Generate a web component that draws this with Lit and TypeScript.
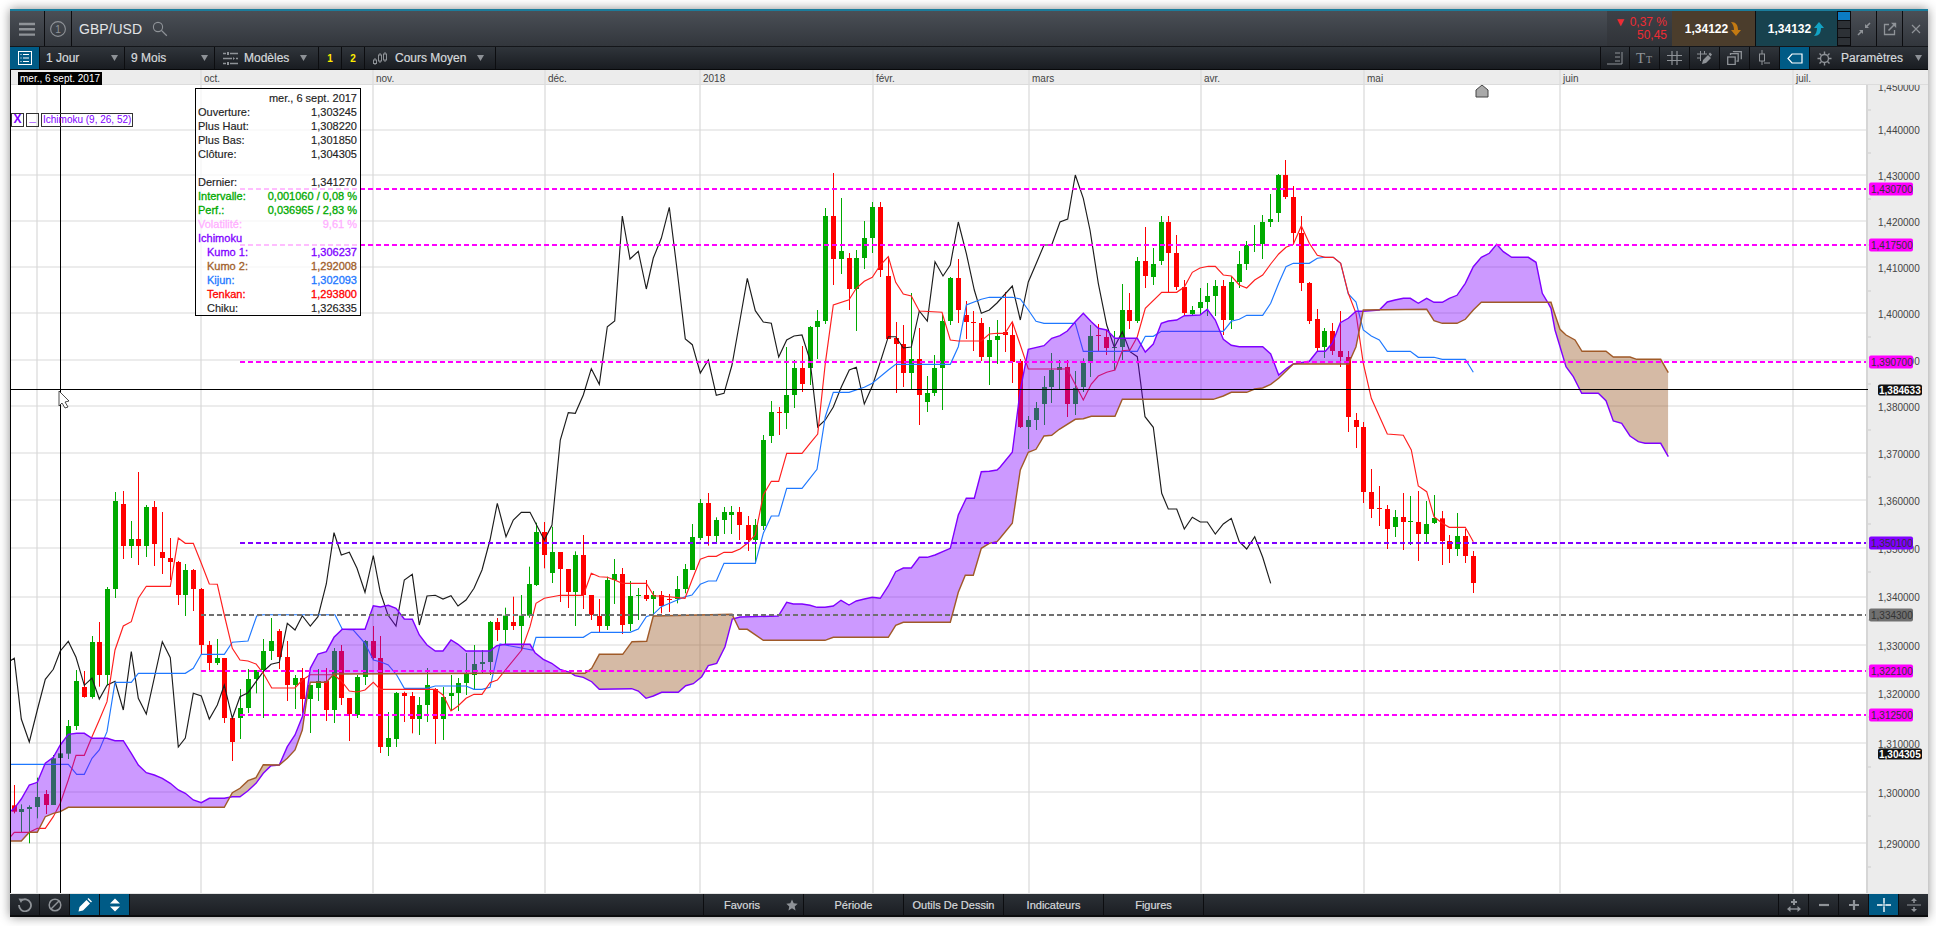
import { LitElement, html, css, svg } from "lit";
import { customElement } from "lit/decorators.js";

type Pt = [number, number];
type Candle = [number, number, number, number, number, number];

// traced at 3x, so every series keeps its origin and gets divided down here
const trace = (ox: number, oy: number, flat: number[]): Pt[] => {
  const out: Pt[] = [];
  for (let i = 0; i < flat.length; i += 2) out.push([ox + flat[i] / 3, oy + flat[i + 1] / 3]);
  return out;
};
const toPath = (p: Pt[]) => p.map((q) => `${q[0].toFixed(1)},${q[1].toFixed(1)}`).join(" ");

// x, wick top, wick bottom, body top, body bottom, 1 = up
const CANDLES_A: Candle[] = [
  [43,1155,1240,1216,1235,0],[64,1213,1298,1227,1236,1],[88,1216,1330,1221,1227,1],[111,1133,1255,1191,1221,1],
  [137,1170,1242,1182,1215,0],[159,1065,1215,1075,1215,1],[181,1050,1074,1060,1074,1],[205,960,1077,978,1061,1],
  [228,810,990,843,978,1],[253,813,893,861,891,0],[276,708,896,726,891,1],[298,666,860,726,825,0],
  [321,561,855,567,825,1],[345,276,594,303,567,1],[370,273,477,312,438,0],[393,363,474,417,438,1],
  [415,216,495,417,438,0],[438,315,471,321,438,1],[463,303,498,321,432,0],[487,336,522,456,474,0],
  [511,414,540,474,486,0],[535,483,615,486,585,0],[556,492,648,510,585,1],[580,507,633,510,567,0],
  [604,564,765,567,735,0],[628,723,810,735,789,0],[652,717,795,774,789,1],[673,774,969,774,954,0],
  [697,954,1083,954,1026,0],[720,867,1017,924,954,1],[744,807,939,837,924,1],[768,810,880,810,837,1],
  [790,717,954,753,810,1],[813,654,780,723,753,1],[838,687,807,693,771,0],[862,723,903,771,855,0],
  [885,825,927,834,855,1],[907,804,940,834,897,0],[931,855,999,855,897,1],[954,807,903,843,864,1],
  [979,804,963,843,930,0],[1002,744,969,753,930,1],[1024,735,915,753,894,0],[1048,894,1023,894,942,0],
  [1071,825,954,831,945,1],[1095,720,855,723,831,1],[1120,678,780,723,774,0],[1141,708,1059,774,1041,0],
  [1164,936,1068,1014,1041,1],[1188,876,1041,879,1017,1],[1213,875,966,879,888,0],[1237,876,1000,888,957,0],
  [1258,891,1005,915,957,1],[1281,804,966,855,915,1],[1306,864,1032,867,957,0],[1329,861,1020,891,957,1],
  [1353,825,930,879,888,1],[1374,834,933,849,879,1],[1398,759,885,822,849,1],[1422,735,867,792,825,1],
  [1446,750,820,786,792,1],[1470,663,825,666,786,1],[1492,654,723,666,690,0],
];
const CANDLES_B: Candle[] = [
  [15,1373,1485,1397,1440,1],[40,1340,1440,1416,1428,0],[64,1335,1500,1397,1428,1],[87,1250,1403,1302,1397,1],
  [108,1118,1308,1146,1305,1],[133,1116,1255,1146,1215,0],[156,1130,1299,1206,1269,1],[181,1206,1356,1206,1257,0],
  [205,1257,1374,1257,1326,0],[226,1204,1428,1215,1326,1],[250,1155,1377,1215,1335,0],[274,1335,1410,1335,1395,0],
  [298,1347,1446,1398,1428,0],[321,1280,1440,1290,1428,1],[342,1227,1362,1272,1290,1],[367,1254,1452,1272,1425,0],
  [390,1293,1443,1338,1422,1],[415,1314,1410,1335,1338,1],[439,1290,1353,1335,1347,0],[460,1323,1400,1335,1347,1],
  [484,1323,1390,1335,1368,0],[508,1332,1386,1347,1350,0],[532,1278,1360,1317,1347,1],[555,1242,1330,1257,1317,1],
  [576,1122,1260,1161,1260,1],[600,1047,1170,1059,1164,1],[625,1029,1187,1059,1158,0],[648,1102,1176,1110,1158,1],
  [672,1071,1152,1086,1110,1],[693,1068,1152,1086,1095,1],[718,1071,1170,1086,1125,0],[743,1098,1203,1125,1170,0],
  [765,1107,1240,1125,1170,1],[789,855,1140,870,1128,1],[814,753,879,786,858,1],[836,771,855,786,789,0],
  [858,591,837,735,789,1],[882,630,774,654,735,1],[907,588,726,654,702,0],[930,528,705,531,654,1],
  [951,480,627,513,531,1],[975,174,522,198,513,1],[1000,69,405,198,327,0],[1023,144,372,303,327,1],
  [1048,309,480,324,417,0],[1068,300,543,324,417,1],[1092,213,357,264,324,1],[1116,156,309,171,264,1],
  [1141,156,381,171,360,0],[1165,321,567,378,567,0],[1187,516,729,564,582,0],[1210,525,711,582,669,0],
  [1234,429,717,627,669,1],[1258,534,825,627,735,0],[1281,678,786,729,756,1],[1302,615,738,654,729,1],
  [1326,495,780,513,654,1],[1350,381,525,384,513,1],[1375,327,519,384,480,0],[1399,453,567,495,516,0],
  [1420,483,603,516,519,0],[1444,504,633,519,621,0],[1467,531,705,570,621,1],[1491,510,642,558,570,1],
];
const CANDLES_C: Candle[] = [
  [16,426,606,546,555,0],[37,516,699,555,636,0],[61,627,834,633,831,0],[84,798,897,810,831,1],
  [108,756,840,774,810,1],[132,678,825,711,762,1],[153,609,759,660,711,1],[178,630,720,651,660,1],
  [202,630,801,651,762,0],[226,663,795,714,762,1],[249,625,726,639,711,1],[270,525,681,558,639,1],
  [295,522,606,555,558,0],[319,540,615,561,594,0],[343,543,660,591,594,1],[366,402,630,480,591,1],
  [388,429,537,480,513,0],[411,321,519,333,513,1],[436,231,414,333,378,0],[459,294,405,342,381,1],
  [483,198,345,216,333,1],[505,198,426,216,309,0],[529,255,420,309,411,0],[553,390,498,411,489,0],
  [576,468,498,480,492,1],[600,414,492,456,474,1],[621,399,498,438,456,1],[645,390,498,408,438,1],
  [670,390,555,408,510,0],[693,381,537,396,510,1],[717,303,414,342,396,1],[738,273,360,285,342,1],
  [763,225,306,282,285,1],[786,195,327,216,282,1],[810,132,231,207,216,1],[834,72,216,75,189,1],
  [856,30,147,75,141,0],[880,108,282,141,249,0],[904,198,423,249,399,0],[928,396,522,399,513,0],
  [952,477,603,507,594,0],[973,534,624,543,591,1],[997,519,615,543,603,0],[1021,483,651,603,621,0],
  [1045,603,846,621,801,0],[1069,789,894,810,831,0],[1090,816,1059,831,1026,0],[1114,957,1104,1026,1077,0],
  [1138,1008,1128,1074,1077,0],[1162,1065,1197,1077,1137,0],[1185,1080,1161,1101,1131,1],[1210,1029,1200,1101,1116,0],
  [1231,1038,1185,1113,1116,1],[1255,1023,1233,1116,1152,0],[1278,1053,1179,1122,1152,1],[1302,1035,1122,1104,1119,1],
  [1327,1083,1245,1105,1173,0],[1348,1155,1239,1173,1197,0],[1371,1089,1218,1158,1197,1],[1396,1137,1239,1158,1218,0],
  [1420,1203,1329,1218,1299,0],
];

const CHIKOU: Pt[] = [
  ...trace(0, 400, [30,783,43,775,64,957,88,1026,112,930,136,838,160,808,181,753,205,724,228,772,253,856,276,834,298,897,321,856,345,844,370,930,394,755,415,895,439,942,487,725,511,773,535,1041,556,1014,580,880,604,888,628,957,652,915,673,855,697,955,720,890,744,878,768,845,790,815,813,793,838,787,862,670,885,690,907,647,931,678,954,650,979,552,1002,398,1024,465,1048,457,1071,505,1095,577,1120,467,1141,577,1164,645,1188,678,1213,540,1237,523,1258,675,1281,588,1306,586,1329,597,1353,587,1374,618,1398,600,1422,565,1446,510,1470,420,1492,310]),
  ...trace(500, 150, [18,1160,40,1110,64,1087,90,1087,133,1170,156,1125,181,870,205,788,226,790,250,735,274,656,298,703,322,530,344,513,367,198,390,327,415,304,439,417,460,324,484,265,508,172,532,365,556,567,577,584,601,669,625,630,649,736,672,730,696,645,720,510,742,385,766,482,790,516,814,520,836,621,860,570,882,558,906,555,930,630,953,831,976,810,1000,771,1024,711,1048,660,1069,652,1093,762,1117,708,1141,636,1165,560,1187,560,1210,594,1234,591,1258,483,1282,513,1305,335,1329,378,1351,345,1375,216,1399,310,1423,420,1444,490,1468,480,1491,459]),
  ...trace(1000, 150, [37,408,61,510,85,396,108,342,132,285,155,285,180,216,203,207,226,75,250,145,270,240,295,400,320,525,343,592,367,545,390,605,412,620,435,800,460,832,485,1030,505,1077,530,1077,553,1137,577,1102,601,1116,622,1116,646,1152,670,1122,694,1105,718,1175,740,1197,764,1160,788,1222,812,1300]),
];
const TENKAN: Pt[] = [
  ...trace(0, 400, [30,1312,43,1297,88,1297,112,1285,136,1285,160,1250,181,1210,205,1140,228,1066,253,1066,276,1010,298,960,321,905,345,750,370,678,394,665,415,595,439,559,511,559,535,414,556,430,580,430,604,490,628,552,652,553,673,645,697,745,720,780,744,783,768,792,790,820,815,864,885,864,907,840,931,824,1002,824,1024,843,1048,873,1071,876,1095,870,1120,847,1141,868,1306,868,1329,885,1353,933,1374,918,1398,895,1422,883,1446,883,1470,848,1492,840]),
  ...trace(500, 150, [65,1500,90,1430,108,1360,133,1345,181,1336,250,1336,274,1270,298,1280,322,1282,344,1290,367,1300,439,1300,462,1338,484,1338,555,1345,576,1290,601,1228,625,1219,649,1219,672,1207,696,1207,720,1197,742,1180,766,1155,790,1035,814,994,836,994,860,910,906,910,930,880,953,852,976,640,1000,465,1047,449,1069,415,1093,394,1117,382,1141,345,1165,320,1187,397,1210,432,1234,438,1258,483,1326,487,1351,570,1375,573,1444,573,1468,552,1491,550]),
  ...trace(1000, 150, [15,550,37,515,61,585,85,657,202,657,250,750,274,702,295,678,320,667,345,660,367,602,390,600,412,560,436,475,485,427,530,427,553,411,577,367,600,354,625,349,646,349,670,375,694,378,718,405,740,414,764,390,788,375,812,342,836,312,858,292,880,283,904,228,928,280,952,316,976,322,1000,322,1022,340,1045,430,1068,490,1090,640,1114,745,1162,852,1210,856,1234,900,1255,1008,1280,1025,1302,1100,1327,1120,1348,1132,1396,1132,1420,1175]),
];
const KIJUN: Pt[] = [
  ...trace(0, 400, [30,1093,205,1093,230,1123,253,1123,276,1075,298,1050,321,995,345,847,394,847,415,820,556,820,580,805,604,763,673,763,697,727,744,723,770,648,790,644,1005,644,1027,688,1060,690,1095,730,1120,780,1141,785,1165,795,1190,825,1213,865,1281,865,1306,858,1398,858,1422,868,1446,868,1470,862]),
  ...trace(500, 150, [0,1482,97,1500,108,1462,250,1462,274,1447,390,1447,415,1437,439,1400,460,1393,484,1370,555,1340,576,1335,601,1303,625,1293,649,1293,672,1240,766,1240,790,1150,814,1098,836,1098,860,1015,906,1015,951,958,976,800,1000,727,1047,727,1093,712,1117,700,1165,660,1187,643,1351,643,1375,590,1399,465,1444,448,1468,442,1500,442]),
  ...trace(1000, 150, [37,442,61,447,85,480,108,514,132,520,226,520,250,604,412,604,436,559,460,559,484,544,670,544,694,514,718,508,740,496,788,496,812,460,836,400,858,350,880,340,928,340,952,325,976,322,1000,322,1022,340,1045,432,1068,456,1090,540,1114,558,1138,570,1162,604,1231,604,1255,622,1302,622,1327,628,1396,628,1420,667]),
];
const KUMO_A: Pt[] = [
  ...trace(0, 400, [30,1235,43,1225,64,1197,88,1155,112,1147,136,1090,160,1072,181,1035,205,1003,230,1000,253,1000,276,1015,321,1015,345,1022,370,1022,394,1060,415,1095,439,1118,463,1125,487,1135,511,1150,535,1170,556,1180,580,1200,604,1208,628,1195,673,1195,697,1190,720,1190,744,1172,768,1150,790,1120,813,1097,838,1095,862,1040,885,1005,907,950,920,880,931,805,954,762,979,755,1002,712,1027,688,1095,688,1120,617,1141,621,1165,616,1188,625,1213,657,1237,658,1258,705,1281,735,1306,753,1329,753,1353,720,1374,733,1398,753,1470,753]),
  ...trace(480, 630, [50,47,75,43,150,43,165,68,190,88,215,100,240,118,270,127,285,137,310,142,335,155,358,178,455,176,475,183,498,205,520,198,545,187,595,187,617,167,640,161,665,140,685,107,710,100,735,50]),
  ...trace(500, 150, [697,1407,720,1401,835,1398,860,1357,880,1362,906,1362,930,1366,951,1372,975,1372,1000,1368,1023,1351,1047,1365,1069,1353,1093,1347,1117,1342,1141,1345,1165,1308,1187,1265,1210,1254,1234,1254,1258,1222,1282,1222,1305,1215,1351,1195,1375,1095,1399,1045,1423,1045,1444,965,1468,964,1491,960]),
  ...trace(1000, 150, [0,952,37,907,61,720,85,598,132,587,155,565,180,557,202,543,226,515,250,490,274,515,295,535,320,540,345,565,412,565,436,606,460,582,484,520,505,513,530,510,553,497,600,495,622,478,646,510,670,568,694,586,718,590,788,590,812,612,836,675,860,655,880,642,928,634,952,604,976,604,997,580,1021,518,1045,505,1068,484,1090,484,1138,480,1162,456,1185,450,1210,445,1231,445,1255,460,1280,445,1302,457,1327,457,1348,445,1371,436,1396,400,1420,350,1444,322,1468,310]),
  ...trace(1480, 230, [50,43,70,65,95,82,145,82,168,97,187,190,205,220,213,235,225,300,237,340,258,410,280,440,305,490,355,490,378,512,400,573,425,580,450,618,475,635,495,640,542,640,565,680]),
];
const KUMO_B: Pt[] = [
  ...trace(0, 400, [30,1323,64,1323,88,1297,112,1297,136,1250,160,1240,181,1235,205,1222,673,1222,697,1178,720,1165,744,1142,768,1133,790,1094,838,1095,862,1075,885,1050,907,990,920,900,931,847,979,847,1002,822,1500,820]),
  ...trace(480, 630, [315,130,335,115,358,73,428,73]),
  ...trace(500, 150, [396,1475,440,1474,460,1398,696,1393,718,1438,742,1438,790,1471,975,1471,1000,1462,1165,1462,1187,1426,1210,1417,1351,1417,1375,1327,1396,1276,1420,1276,1444,1195,1468,1180,1491,1175]),
  ...trace(1000, 150, [0,1165,37,1120,61,960,85,907,108,898,132,858,155,856,178,838,226,808,250,806,274,799,345,799,367,748,640,748,670,738,694,727,740,727,764,717,788,714,812,703,836,685,880,642,1045,642,1068,590,1090,480,1280,478,1302,512,1327,520,1371,520,1396,508,1420,480,1444,457]),
  ...trace(1480, 230, [213,217,222,245,240,298,258,315,285,330,306,364,378,364,400,381,450,381,470,388,542,388,565,428]),
];

const GRID_Y = [130,175,221,267,313,360,406,453,500,548,597,645,693,743,792,843];
const MONTHS: [string, number][] = [
  ["oct.",201],["nov.",373],["déc.",545],["2018",700],["févr.",873],["mars",1029],["avr.",1201],["mai",1364],["juin",1560],["juil.",1793],
];
const PRICES: [string, number][] = [
  ["1,450000",87],["1,440000",130],["1,430000",176],["1,420000",222],["1,410000",268],["1,400000",314],["1,390000",361],["1,380000",407],
  ["1,370000",454],["1,360000",501],["1,350000",549],["1,340000",597],["1,330000",646],["1,320000",694],["1,310000",744],["1,300000",793],["1,290000",844],
];
const LEVELS: [string, number, number, string][] = [
  ["1,430700",189,240,"#ff00ff"],["1,417500",245,240,"#ff00ff"],["1,390700",362,240,"#ff00ff"],
  ["1,350100",543,240,"#8000ff"],["1,334300",615,201,"#707070"],["1,322100",671,201,"#ff00ff"],["1,312500",715,240,"#ff00ff"],
];
const INFO: [string, string, string][] = [
  ["Ouverture:","1,303245",""],["Plus Haut:","1,308220",""],["Plus Bas:","1,301850",""],["Clôture:","1,304305",""],["","",""],
  ["Dernier:","1,341270",""],["Intervalle:","0,001060 / 0,08 %","green"],["Perf.:","0,036965 / 2,83 %","green"],["Volatilité:","9,61 %","pink"],
  ["Ichimoku","","violet"],["Kumo 1:","1,306237","violet sub"],["Kumo 2:","1,292008","brown sub"],["Kijun:","1,302093","blue sub"],["Tenkan:","1,293800","red sub"],["Chiku:","1,326335","sub"],
];

const arrow = html`<svg class="caret" width="7" height="6" viewBox="0 0 7 6"><path d="M0 0h7L3.500 6z" fill="#8d9196"/></svg>`;
const ico = (w: number, h: number, body: unknown) =>
  html`<svg width=${w} height=${h} viewBox="0 0 ${w} ${h}" fill="none" stroke="currentColor">${body}</svg>`;

@customElement("app-root")
export class AppRoot extends LitElement {
  static styles = css`
    :host {
      display: block;
      height: 926px;
      padding: 9px 8px 0 10px;
      box-sizing: border-box;
      background: #fff;
      font-family: "Liberation Sans", Arial, sans-serif;
      overflow: hidden;
    }
    .window {
      width: 1918px;
      height: 908px;
      display: flex;
      flex-direction: column;
      box-shadow: 0 0 10px rgba(0, 0, 0, 0.45);
    }
    .accent { height: 2px; background: #1b7d9c; flex: none; }
    .top {
      height: 35px;
      flex: none;
      display: flex;
      background: linear-gradient(#4a4f56, #32363c);
      border-bottom: 1px solid #14161a;
      color: #8f9398;
    }
    .cell {
      display: flex;
      align-items: center;
      justify-content: center;
      box-sizing: border-box;
      border-right: 1px solid #0c0d10;
      height: 100%;
      flex: none;
      color: #8f9398;
    }
    .burger { width: 35px; }
    .one { width: 27px; }
    .one text { font-size: 10px; fill: #8f9398; stroke: none; }
    .pair { display: flex; align-items: center; gap: 10px; padding-left: 7px; color: #e2e4e6; font-size: 14px; }
    .pair svg { color: #8f9398; }
    .grow { flex: 1; }
    .change {
      width: 65px;
      flex: none;
      display: flex;
      flex-direction: column;
      justify-content: center;
      align-items: flex-end;
      padding-right: 5px;
      box-sizing: border-box;
      color: #ee2b33;
      font-size: 12px;
      line-height: 13px;
      background: linear-gradient(#3d4147, #303338);
    }
    .quote {
      flex: none;
      display: flex;
      align-items: center;
      justify-content: center;
      gap: 2px;
      color: #fff;
      font-weight: bold;
      font-size: 12px;
      box-sizing: border-box;
      border-right: 1px solid #0c0d10;
    }
    .sell { width: 84px; background: #4b3d2c; color: #fff; }
    .buy { width: 82px; background: #18424e; }
    .levels {
      width: 12px;
      flex: none;
      display: grid;
      grid-template-rows: repeat(4, 1fr);
      gap: 1px;
      background: #0c0d10;
      padding: 1px 0;
      box-sizing: border-box;
    }
    .levels span { background: #2d3136; }
    .levels span.on { background: #0b7cc4; }
    .win { width: 26px; border-left: 1px solid #0c0d10; border-right: none; }
    .win.last { width: 26px; }

    .bar {
      height: 23px;
      flex: none;
      display: flex;
      background: linear-gradient(#30353b, #191c21);
      border-bottom: 1px solid #08090b;
      box-sizing: border-box;
      color: #d6d9dc;
      font-size: 12px;
    }
    .bar span { -webkit-text-stroke: 0.2px; white-space: nowrap; }
    .on-blue { background: #005b86; color: #fff; }
    .square { width: 30px; }
    .pick { justify-content: space-between; padding: 0 6px; }
    .w84 { width: 85px; }
    .w90 { width: 90px; }
    .w104 { width: 104px; padding: 0 11px 0 8px; }
    .w104 span { margin: 0 auto 0 6px; }
    .w131 { width: 131px; padding: 0 11px 0 8px; }
    .w131 span { margin: 0 auto 0 8px; }
    .pick span { color: #d6d9dc; }
    .num { width: 23px; color: #ffec00; font-weight: bold; font-size: 10px; }
    .tools { border-left: 1px solid #0c0d10; }
    .params { width: 118px; justify-content: flex-start; padding-left: 7px; gap: 9px; border-right: none; }
    .params span { color: #d6d9dc; width: 62px; margin-right: 3px; }
    .tt { font-family: "Liberation Serif", serif; stroke: none; fill: currentColor; }

    .chart { position: relative; height: 823px; flex: none; overflow: hidden; }
    .chart > svg { display: block; }
    .chart text { font-family: "Liberation Sans", Arial, sans-serif; }
    .legend {
      position: absolute;
      left: 1px;
      top: 43px;
      display: flex;
      gap: 2px;
      color: #8000ff;
      font-size: 10px;
      line-height: 12px;
    }
    .legend span {
      border: 1px solid #333;
      height: 12px;
      box-sizing: content-box;
      white-space: nowrap;
    }
    .legend .mark { width: 11px; text-align: center; font-weight: bold; font-size: 12px; line-height: 11px; }
    .legend .mark.under { line-height: 7px; }
    .legend .name { padding: 0 1px; width: 88px; }
    .info {
      position: absolute;
      left: 185px;
      top: 18px;
      width: 166px;
      box-sizing: border-box;
      border: 1px solid #000;
      background: rgba(255, 255, 255, 0.74);
      padding: 2px 3px 0 2px;
      font-size: 11px;
      line-height: 14px;
      height: 228px;
      color: #222;
      -webkit-text-stroke: 0.15px;
    }
    .row { display: flex; justify-content: space-between; height: 14px; white-space: nowrap; }
    .row.date { justify-content: flex-end; }
    .green { color: #00aa00; -webkit-text-stroke: 0.3px; }
    .pink { color: #ffb0ff; -webkit-text-stroke: 0.3px; }
    .violet { color: #8000ff; -webkit-text-stroke: 0.3px; }
    .brown { color: #a0602a; -webkit-text-stroke: 0.3px; }
    .blue { color: #1e78ff; -webkit-text-stroke: 0.3px; }
    .red { color: #ff0000; -webkit-text-stroke: 0.3px; }
    .sub b { padding-left: 9px; font-weight: normal; }
    .row b { font-weight: normal; }

    .foot {
      height: 24px;
      flex: none;
      display: flex;
      background: linear-gradient(#2c3137, #1b1e23);
      border-top: 1px solid #e6e6e6;
      border-bottom: 2px solid #0b0c0e;
      box-sizing: border-box;
    }
    .foot .mid { margin-left: 573px; display: flex; border-left: 1px solid #0c0d10; }
    .foot .tab {
      width: 100px;
      color: #d6d9dc;
      font-size: 11px;
      -webkit-text-stroke: 0.2px;
      position: relative;
    }
    .foot .tab svg { position: absolute; right: 5px; top: 5px; }
    .tab.fav { justify-content: flex-start; padding-left: 20px; }
    .foot .right { margin-left: auto; display: flex; border-left: 1px solid #0c0d10; }
    .foot .lastcell { width: 29px; border-right: none; }
  `;

  private candles(ox: number, oy: number, rows: Candle[]) {
    return rows.map(([x, wt, wb, bt, bb, up]) => {
      const c = up ? "#00aa00" : "#ff0000";
      const cx = Math.round(ox + x / 3) + 0.5;
      return svg`<line x1=${cx} x2=${cx} y1=${oy + wt / 3} y2=${oy + wb / 3} stroke=${c}/>
        <rect x=${cx - 2.5} y=${oy + bt / 3} width="5" height=${Math.max(1, (bb - bt) / 3)} fill=${c}/>`;
    });
  }

  private chart() {
    const band = toPath([...KUMO_A, ...[...KUMO_B].reverse()]);
    const edge = toPath(KUMO_B);
    const dash = "5 3";
    return html`<svg width="1918" height="823" viewBox="10 70 1918 823">
      <defs>
        <clipPath id="aboveB"><polygon points="10,70 ${edge} 1668,70"/></clipPath>
        <clipPath id="belowB"><polygon points="10,893 ${edge} 1668,893"/></clipPath>
      </defs>
      <rect x="10" y="70" width="1918" height="823" fill="#fff"/>
      ${GRID_Y.map((y) => svg`<line x1="10" x2="1867" y1=${y} y2=${y} stroke="#d9d9d9" stroke-width="1.2"/>`)}
      ${[37, ...MONTHS.map((m) => m[1])].map((x) => svg`<line x1=${x} x2=${x} y1="85" y2="893" stroke="#d9d9d9" stroke-width="1.2"/>`)}

      ${this.candles(0, 400, CANDLES_A)}
      ${this.candles(500, 150, CANDLES_B)}
      ${this.candles(1000, 150, CANDLES_C)}

      <polyline points=${toPath(CHIKOU)} fill="none" stroke="#1c1c1c" stroke-width="1.15"/>
      <polyline points=${toPath(KIJUN)} fill="none" stroke="#1e78ff" stroke-width="1.15"/>
      <polyline points=${toPath(TENKAN)} fill="none" stroke="#ff1e1e" stroke-width="1.15"/>

      <polygon points=${band} fill="#8000ff" fill-opacity="0.4" fill-rule="evenodd" clip-path="url(#aboveB)"/>
      <polygon points=${band} fill="#9b5a28" fill-opacity="0.42" fill-rule="evenodd" clip-path="url(#belowB)"/>
      <polyline points=${toPath(KUMO_A)} fill="none" stroke="#8000ff" stroke-width="1.4"/>
      <polyline points=${edge} fill="none" stroke="#a05a28" stroke-width="1.4"/>

      ${LEVELS.map(([, y, x, c]) => svg`<line x1=${x} x2="1867" y1=${y} y2=${y} stroke=${c} stroke-width="2" stroke-dasharray=${dash}/>`)}

      <rect x="1867" y="70" width="61" height="823" fill="#ececec"/>
      <rect x="1866" y="70" width="2" height="823" fill="#d6d6d6"/>
      ${PRICES.map(([t, y]) => svg`<line x1="1868" x2="1871" y1=${y + 23} y2=${y + 23} stroke="#ccc"/>
        <text x="1878" y=${y + 3.5} font-size="10" fill="#444">${t}</text>`)}

      <polygon points="1482,85 1488,90 1488,97 1476,97 1476,90" fill="#a9a9a9" stroke="#444"/>

      <line x1="10" x2="1868" y1="389.5" y2="389.5" stroke="#000"/>
      <line x1="60.5" x2="60.5" y1="85" y2="893" stroke="#000"/>
      <line x1="10.5" x2="10.5" y1="70" y2="893" stroke="#000"/>
      <polygon points="59,391 69,401 65,402 68,407 65,408 62,403 59,406" fill="#fff" stroke="#222" stroke-width="0.8"/>

      ${LEVELS.map(([t, y, , c]) => svg`<rect x="1869" y=${y - 6.5} width="44" height="13" rx="2" fill=${c}/>
        <text x="1871" y=${y + 3.5} font-size="10" fill="#333">${t}</text>`)}
      ${[["1,384633", 390], ["1,304305", 754]].map(([t, y]) => svg`<rect x="1878" y=${(y as number) - 5.5} width="44" height="11" rx="2" fill="#111"/>
        <text x="1879" y=${(y as number) + 3.5} font-size="10" font-weight="bold" fill="#fff">${t}</text>`)}

      <rect x="10" y="70" width="1918" height="14" fill="#ececec"/>
      <rect x="10" y="84" width="1918" height="1" fill="#dcdcdc"/>
      <line x1="10.5" x2="10.5" y1="70" y2="85" stroke="#000"/>
      ${MONTHS.map(([t, x]) => svg`<line x1=${x} x2=${x} y1="70" y2="85" stroke="#dcdcdc" stroke-width="1.2"/>
        <text x=${(x as number) + 3} y="82" font-size="10" fill="#444">${t}</text>`)}
      <rect x="18" y="72" width="84" height="13" fill="#000"/>
      <text x="20" y="82" font-size="10" fill="#fff">mer., 6 sept. 2017</text>
    </svg>`;
  }

  private topBar() {
    return html`<div class="top">
      <div class="cell burger">
        ${ico(16, 14, svg`<path d="M0 2h16M0 7.2h16M0 12.6h16" stroke-width="2.4"/>`)}
      </div>
      <div class="cell one">
        ${ico(18, 18, svg`<circle cx="9" cy="9" r="7.4" stroke-width="1.1"/><text x="6.2" y="12.6" class="one">1</text>`)}
      </div>
      <div class="pair">
        GBP/USD
        ${ico(16, 16, svg`<circle cx="6" cy="6" r="4.6" stroke-width="1.1"/><path d="M9.4 9.4l5.4 5.4" stroke-width="1.3"/>`)}
      </div>
      <div class="grow"></div>
      <div class="change">
        <div>▼ 0,37 %</div>
        <div>50,45</div>
      </div>
      <div class="quote sell">
        1,34122
        <svg width="12" height="16" viewBox="0 0 12 16"><path d="M1 1c5 0 7 3 7 8h3l-5 6-5-6h3c0-3-1-6-3-8z" fill="#c47a12"/></svg>
      </div>
      <div class="quote buy">
        1,34132
        <svg width="12" height="16" viewBox="0 0 12 16"><path d="M1 15c5 0 7-3 7-8h3L6 1 1 7h3c0 3-1 6-3 8z" fill="#13a3c4"/></svg>
      </div>
      <div class="levels"><span class="on"></span><span></span><span></span><span></span></div>
      <div class="cell win">
        ${ico(14, 14, svg`<path d="M1 13l4-4M13 1L9 5" stroke-width="1.6"/><path d="M2 8h4v4zM12 6H8V2z" fill="currentColor" stroke="none"/>`)}
      </div>
      <div class="cell win">
        ${ico(14, 14, svg`<path d="M6 2.5H1.5v10h10V8" stroke-width="1.3"/><path d="M5.5 8.5L12 2" stroke-width="1.6"/><path d="M8 0.8h5.2V6z" fill="currentColor" stroke="none"/>`)}
      </div>
      <div class="cell win last">
        ${ico(10, 10, svg`<path d="M1 1l8 8M9 1L1 9" stroke-width="1.2"/>`)}
      </div>
    </div>`;
  }

  private toolBar() {
    return html`<div class="bar">
      <div class="cell square on-blue">
        ${ico(14, 14, svg`<rect x="0.5" y="0.5" width="13" height="13" stroke-width="1"/><path d="M5 3.5h6M5 7h6M5 10.5h6M2.5 3.5h1M2.5 7h1M2.5 10.5h1"/>`)}
      </div>
      <div class="cell pick w84"><span>1 Jour</span>${arrow}</div>
      <div class="cell pick w90"><span>9 Mois</span>${arrow}</div>
      <div class="cell pick w104">
        ${ico(15, 13, svg`<path d="M0 1.5h3M7 1.5h8M0 6.5h9M13 6.5h2M0 11.5h3M7 11.5h8" stroke-width="1.3"/><path d="M4 0h2v3H4zM10 5l2 1.5L10 8zM4 10h2v3H4z" fill="currentColor" stroke="none"/>`)}
        <span>Modèles</span>${arrow}
      </div>
      <div class="cell num">1</div>
      <div class="cell num">2</div>
      <div class="cell pick w131">
        ${ico(14, 13, svg`<path d="M2 6v2M2 11.5v1.5M7 1v2M7 9v2M12 0v2M12 8v2"/><rect x="0.5" y="8" width="3" height="3.5"/><rect x="5.5" y="3" width="3" height="6"/><rect x="10.5" y="2" width="3" height="6"/>`)}
        <span>Cours Moyen</span>${arrow}
      </div>
      <div class="grow"></div>
      <div class="cell square tools">
        ${ico(16, 14, svg`<path d="M0 13h15V1M8 2h5M8 6h5M8 10h5"/>`)}
      </div>
      <div class="cell square">
        ${ico(20, 20, svg`<text x="1" y="15" font-size="15" class="tt">T</text><text x="11" y="15" font-size="10" class="tt">T</text>`)}
      </div>
      <div class="cell square">
        ${ico(15, 14, svg`<path d="M5 0v14M10 0v14M0 4.5h15M0 9.5h15" stroke-width="1.2"/>`)}
      </div>
      <div class="cell square">
        ${ico(16, 14, svg`<path d="M3.5 0v10M7.5 0v3M0 3h10M0 7h3" stroke-width="1"/><path d="M5 13l1-4 5-5 3 3-5 5zM11.5 3l1.5-1.5 2 2L13.500 5.500z" fill="currentColor" stroke="none"/>`)}
      </div>
      <div class="cell square">
        ${ico(15, 14, svg`<rect x="0.700" y="6" width="7.500" height="7.500" stroke-width="1.300"/><path d="M3.500 4V2.700h7.700v7.500H9.500M6.500 1V0.700h7.800v7.500" stroke-width="1.300"/>`)}
      </div>
      <div class="cell square">
        ${ico(12, 16, svg`<path d="M3 0v4M3 11v4M5 13h6"/><rect x="0.500" y="4" width="5" height="7"/>`)}
      </div>
      <div class="cell square on-blue">
        ${ico(16, 11, svg`<path d="M15 1H5L1 5.500 5 10h10z" stroke-width="1.200"/>`)}
      </div>
      <div class="cell params">
        ${ico(15, 15, svg`<circle cx="7.500" cy="7.500" r="4" stroke-width="1.400"/><path d="M7.500 0.500v3M7.500 11.500v3M0.500 7.500h3M11.500 7.500h3M2.500 2.500l2 2M10.500 10.500l2 2M12.500 2.500l-2 2M4.500 10.500l-2 2" stroke-width="1.400"/>`)}
        <span>Paramètres</span>${arrow}
      </div>
    </div>`;
  }

  private footBar() {
    return html`<div class="foot">
      <div class="cell square">
        ${ico(14, 14, svg`<path d="M3 2.800A6 6 0 1 1 1 7" stroke-width="1.800"/><path d="M0.500 0.500L5 0.800 3 5z" fill="currentColor" stroke="none"/>`)}
      </div>
      <div class="cell square">
        ${ico(14, 14, svg`<circle cx="7" cy="7" r="5.800" stroke-width="1.500"/><path d="M3 11l8-8" stroke-width="1.500"/>`)}
      </div>
      <div class="cell square on-blue">
        ${ico(14, 14, svg`<path d="M0.500 13.500l1-4.500 7-7 3.500 3.500-7 7zM9.500 1l1-1 3.500 3.500-1 1z" fill="#fff" stroke="none"/>`)}
      </div>
      <div class="cell square on-blue">
        ${ico(12, 14, svg`<path d="M6 0.500l5 5H1zM6 13.500l5-5H1z" fill="#fff" stroke="none"/>`)}
      </div>
      <div class="mid">
        <div class="cell tab fav">
          Favoris
          <svg width="12" height="12" viewBox="0 0 24 24"><path d="M12 1l3.400 7.500 8 .9-6 5.400 1.700 8L12 18.700 4.900 22.800l1.700-8-6-5.400 8-.9z" fill="#8f9398"/></svg>
        </div>
        <div class="cell tab">Période</div>
        <div class="cell tab">Outils De Dessin</div>
        <div class="cell tab">Indicateurs</div>
        <div class="cell tab">Figures</div>
      </div>
      <div class="right">
        <div class="cell square">
          ${ico(14, 14, svg`<path d="M7 1v6M4 4h6" stroke-width="2"/><path d="M1 11h12" stroke-width="1.400"/><path d="M0 11l3.500-3v6zM14 11l-3.500-3v6z" fill="currentColor" stroke="none"/>`)}
        </div>
        <div class="cell square">${ico(10, 4, svg`<path d="M0 2h10" stroke-width="2.200"/>`)}</div>
        <div class="cell square">${ico(10, 10, svg`<path d="M0 5h10M5 0v10" stroke-width="2.200"/>`)}</div>
        <div class="cell square on-blue">
          ${ico(14, 14, svg`<path d="M0 7h5.500M8.500 7H14M7 0v5.500M7 8.500V14" stroke-width="1.400"/><circle cx="7" cy="7" r="1" stroke-width="0.800"/>`)}
        </div>
        <div class="cell lastcell">
          ${ico(14, 14, svg`<path d="M0 7h14"/><path d="M7 1v4M7 9v4" stroke-width="1.500"/><path d="M7 0l3 3H4zM7 14l3-3H4z" fill="currentColor" stroke="none"/>`)}
        </div>
      </div>
    </div>`;
  }

  render() {
    return html`<div class="window">
      <div class="accent"></div>
      ${this.topBar()}
      ${this.toolBar()}
      <div class="chart">
        ${this.chart()}
        <div class="legend">
          <span class="mark">X</span><span class="mark under">_</span><span class="name">Ichimoku (9, 26, 52)</span>
        </div>
        <div class="info">
          <div class="row date">mer., 6 sept. 2017</div>
          ${INFO.map(([k, v, cls]) => html`<div class="row ${cls}"><b>${k}</b><span>${v}</span></div>`)}
        </div>
      </div>
      ${this.footBar()}
    </div>`;
  }
}
